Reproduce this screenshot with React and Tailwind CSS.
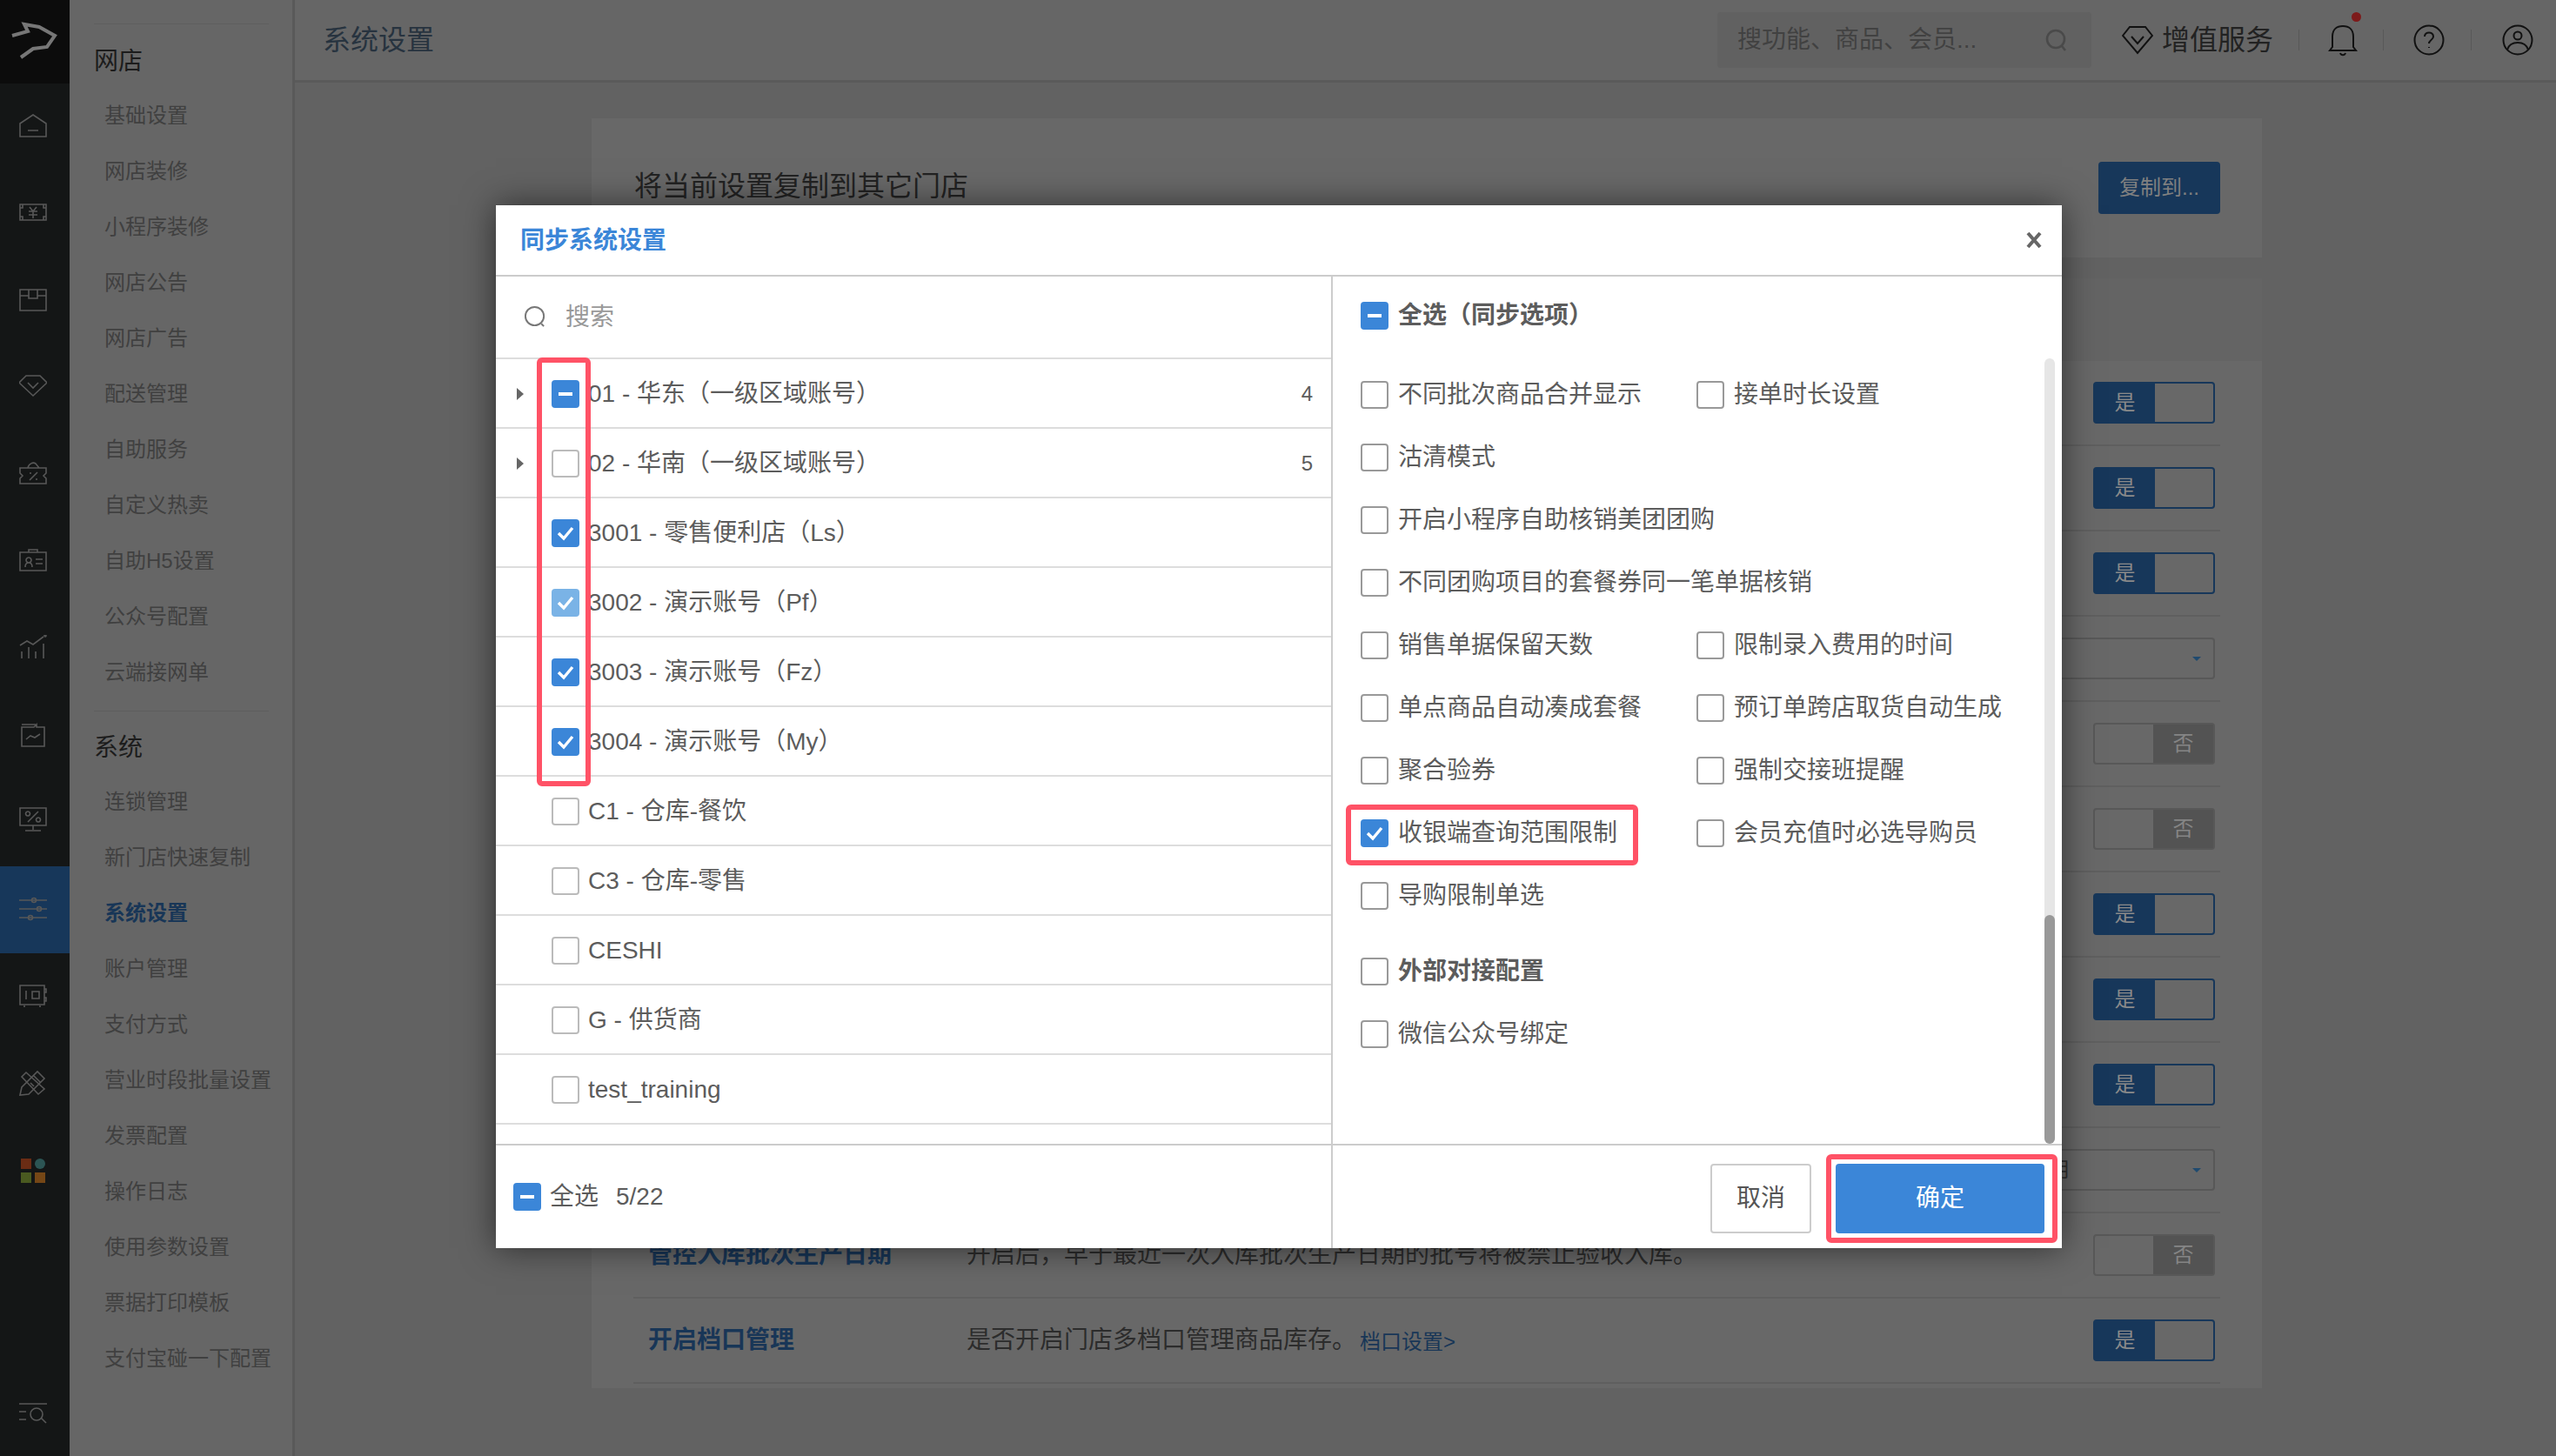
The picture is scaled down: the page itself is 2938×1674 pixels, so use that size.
import React from "react";

const stroke = { fill: "none", stroke: "currentColor", strokeWidth: 1.6 };

// rail icons
const railIcons = [
  <g key="home"><path d="M1 12 16 2l15 10v15H1zM10 20h12" /></g>,
  <g key="money"><path d="M1 5h30v18H1zM1 9h3V5M28 5v4h3M1 19h3v4M28 23v-4h3M12 8l4 5 4-5M11 13h10M11 17h10M16 13v8" /></g>,
  <g key="box"><path d="M1 3h30v24H1zM1 10h10M21 10h10M11 3v10h10V3" /></g>,
  <g key="diamond"><path d="M8 2h16l8 8-16 15L0 10zM10 10l6 6 6-6" /></g>,
  <g key="ticket"><path d="M1 8h30v6l-3 3 3 3v6H1v-6l3-3-3-3zM10 8c1-5 6-7 9-5l4 5M21 13 12 22M12 14h2M19 21h2" /></g>,
  <g key="card"><path d="M1 5h30v21H1zM11 2h10v3H11zM7 22c0-4 2-5 4-5s4 1 4 5M11 11a3 3 0 1 0 .01 0M19 13h8M19 18h8" /></g>,
  <g key="chart"><path d="M1 12l8-5 7 4 12-9M3 27v-8M11 27V14M19 27v-8M28 27V10" /><circle cx="30" cy="1" r="1" /></g>,
  <g key="folder"><path d="M3 6h14l3-3v3h9v22H3zM3 3h16M8 20l5-4 5 2 6-4" /></g>,
  <g key="promo"><path d="M1 3h30v20H1zM16 23v5M7 29h18M10 19 22 7M10 7a2.5 2.5 0 1 0 .01 0M22 14a2.5 2.5 0 1 0 .01 0" /></g>,
  <g key="sliders"><path d="M0 5h32M0 15h32M0 25h32" /><circle cx="17" cy="5" r="2.5" /><circle cx="23" cy="15" r="2.5" /><circle cx="13" cy="25" r="2.5" /></g>,
  <g key="safe"><path d="M1 3h28v22H1zM29 7h2v4h-2M29 17h2v4h-2M6 26v2M24 26v2M8 9v10M15 10h8v8h-8z" /></g>,
  <g key="tools"><path d="M1 29l2-9L21 2l8 8-18 18zM16 6l8 8M8 3 3 8l19 20 7-6zM13 15l4 4" /></g>,
];

const Checkbox = ({ state, tone = "border-[#bbbbbb]" }) => {
  if (state === "on" || state === "soft" || state === "part") {
    return (
      <span className={`flex w-[32px] h-[32px] shrink-0 items-center justify-center rounded-[4px] ${state === "soft" ? "bg-[#7ab3e6]" : "bg-[#3b86d8]"}`}>
        {state === "part" ? (
          <span className="w-[16px] h-[4px] bg-white" />
        ) : (
          <svg viewBox="0 0 24 24" className="w-[24px] h-[24px]" fill="none" stroke="white" strokeWidth="3.4">
            <path d="M4 12l6 6L20 6" />
          </svg>
        )}
      </span>
    );
  }
  return <span className={`block w-[32px] h-[32px] shrink-0 rounded-[4px] border-2 bg-white ${tone}`} />;
};

const Toggle = ({ on }) =>
  on ? (
    <div className="flex w-[140px] h-[48px] rounded-[4px] border-2 border-[#17375a] bg-[#686868]">
      <span className="flex w-[69px] items-center justify-center bg-[#17375a] text-[24px] text-[#8a8a8a]">是</span>
    </div>
  ) : (
    <div className="flex w-[140px] h-[48px] justify-end rounded-[4px] border-2 border-[#585858] bg-[#686868]">
      <span className="flex w-[69px] items-center justify-center bg-[#535353] text-[24px] text-[#858585]">否</span>
    </div>
  );

const DropDown = ({ label }) => (
  <div className="flex w-[240px] h-[48px] items-center justify-between rounded-[4px] border-2 border-[#585858] pl-[23px] pr-[14px] text-[24px] text-[#333333]">
    <span>{label}</span>
    <span className="w-0 h-0 border-x-[5px] border-t-[5px] border-x-transparent border-t-[#1f4a6f]" />
  </div>
);

const shopMenu = ["基础设置", "网店装修", "小程序装修", "网店公告", "网店广告", "配送管理", "自助服务", "自定义热卖", "自助H5设置", "公众号配置", "云端接网单"];
const systemMenu = ["连锁管理", "新门店快速复制", "系统设置", "账户管理", "支付方式", "营业时段批量设置", "发票配置", "操作日志", "使用参数设置", "票据打印模板", "支付宝碰一下配置"];

const settingRows = [
  { kind: "on" },
  { kind: "on" },
  { kind: "on" },
  { kind: "select" },
  { kind: "off" },
  { kind: "off" },
  { kind: "on" },
  { kind: "on" },
  { kind: "on" },
  { kind: "select", label: "启用" },
  { kind: "off", title: "管控入库批次生产日期", desc: "开启后，早于最近一次入库批次生产日期的批号将被禁止验收入库。" },
  { kind: "on", title: "开启档口管理", desc: "是否开启门店多档口管理商品库存。", link: "档口设置>" },
];

const stores = [
  { name: "01 - 华东（一级区域账号）", state: "part", count: 4 },
  { name: "02 - 华南（一级区域账号）", state: "off", count: 5 },
  { name: "3001 - 零售便利店（Ls）", state: "on" },
  { name: "3002 - 演示账号（Pf）", state: "soft" },
  { name: "3003 - 演示账号（Fz）", state: "on" },
  { name: "3004 - 演示账号（My）", state: "on" },
  { name: "C1 - 仓库-餐饮", state: "off" },
  { name: "C3 - 仓库-零售", state: "off" },
  { name: "CESHI", state: "off" },
  { name: "G - 供货商", state: "off" },
  { name: "test_training", state: "off" },
];

const syncOptions = [
  ["不同批次商品合并显示", "接单时长设置"],
  ["沽清模式"],
  ["开启小程序自助核销美团团购"],
  ["不同团购项目的套餐券同一笔单据核销"],
  ["销售单据保留天数", "限制录入费用的时间"],
  ["单点商品自动凑成套餐", "预订单跨店取货自动生成"],
  ["聚合验券", "强制交接班提醒"],
  ["收银端查询范围限制", "会员充值时必选导购员"],
  ["导购限制单选"],
];

const Option = ({ label, state = "off", bold }) => (
  <div className={`flex w-[386px] items-center gap-[11px] whitespace-nowrap ${bold ? "font-bold" : ""}`}>
    <Checkbox state={state} tone="border-[#999999]" />
    <span>{label}</span>
  </div>
);

export default function App() {
  return (
    <div className="relative flex w-[2938px] h-[1674px] overflow-hidden bg-[#626262] font-['Liberation_Sans','Noto_Sans_CJK_SC',sans-serif]">
      {/* icon rail */}
      <aside className="flex w-[80px] shrink-0 flex-col bg-[#141616] text-[#585858]">
        <div className="h-[96px] bg-[#0c0c0c]">
          <svg viewBox="0 0 80 95" className="w-[80px] h-[95px]" fill="none" stroke="#777777" strokeWidth="4">
            <path d="M14 41 32 36 28 28 45 31 63 41 54 54 38 56 24 66" />
          </svg>
        </div>
        {railIcons.map((icon, i) => (
          <div key={i} className={`flex h-[100px] items-center justify-center pr-[4px] ${i === 9 ? "bg-[#17375a]" : ""} ${i === 8 ? "pb-[8px]" : ""}`}>
            <svg viewBox="0 0 32 32" className="w-[32px] h-[32px]" {...stroke}>{icon}</svg>
          </div>
        ))}
        <div className="flex h-[100px] items-center justify-center pr-[4px]">
          <svg viewBox="0 0 32 32" className="w-[32px] h-[32px]">
            <rect x="2" y="2" width="12" height="12" fill="#6a2c14" />
            <ellipse cx="24" cy="8" rx="6" ry="6" fill="#2c5554" />
            <rect x="2" y="18" width="12" height="12" fill="#4a5a20" />
            <rect x="18" y="18" width="12" height="12" fill="#754716" />
          </svg>
        </div>
        <div className="mt-auto flex h-[100px] items-center justify-center pr-[4px]">
          <svg viewBox="0 0 32 32" className="w-[32px] h-[32px]" {...stroke}>
            <path d="M0 6h32M0 15h8M0 24h8M25 22l6 6" />
            <circle cx="20" cy="18" r="7" />
          </svg>
        </div>
      </aside>

      {/* second level menu */}
      <nav className="w-[259px] shrink-0 border-r-[3px] border-[#595959] bg-[#666666] px-[28px] pt-[27px] whitespace-nowrap">
        <div className="w-[201px] border-t border-[#5e5e5e]">
          <div className="flex h-[73px] items-center pt-[12px] text-[28px] text-[#1c1c1c]">网店</div>
          {shopMenu.map((item) => (
            <div key={item} className="flex h-[64px] items-center pl-[12px] text-[24px] text-[#404040]">{item}</div>
          ))}
        </div>
        <div className="mt-[12px] w-[201px] border-t border-[#5e5e5e]">
          <div className="flex h-[72px] items-center pt-[12px] text-[28px] text-[#1c1c1c]">系统</div>
          {systemMenu.map((item) => (
            <div key={item} className={`flex h-[64px] items-center pl-[12px] text-[24px] ${item === "系统设置" ? "font-bold text-[#183657]" : "text-[#404040]"}`}>{item}</div>
          ))}
        </div>
      </nav>

      <main className="flex min-w-0 flex-1 flex-col">
        {/* top bar */}
        <header className="flex h-[95px] shrink-0 items-center border-b-[3px] border-[#5a5a5a] bg-[#666666] pl-[32px]">
          <h1 className="text-[32px] text-[#27333f]">系统设置</h1>
          <div className="ml-auto flex w-[430px] h-[64px] items-center justify-between rounded-[4px] bg-[#616161] pl-[23px] pr-[26px] text-[28px] text-[#414141]">
            <span>搜功能、商品、会员...</span>
            <svg viewBox="0 0 28 28" className="w-[28px] h-[28px]" fill="none" stroke="#4a4a4a" strokeWidth="2.6">
              <circle cx="13" cy="13" r="10" />
              <path d="M20 21l4 5" />
            </svg>
          </div>
          <svg viewBox="0 0 36 34" className="ml-[35px] w-[36px] h-[34px]" fill="none" stroke="#111111" strokeWidth="2">
            <path d="M9 2h18l8 10-17 20L1 12zM11 13l7 8 7-8" />
          </svg>
          <span className="ml-[10px] text-[32px] text-[#222222]">增值服务</span>
          <span className="ml-[29px] w-[1px] h-[24px] bg-[#585858]" />
          <div className="relative ml-[33px]">
            <svg viewBox="0 0 34 38" className="w-[34px] h-[38px]" fill="none" stroke="#111111" strokeWidth="2">
              <path d="M2 31h30l-3-4V15C29 7 24 3 17 3S5 7 5 15v12zM14 34c1 3 5 3 6 0" />
            </svg>
            <span className="absolute -top-[13px] left-[27px] w-[11px] h-[11px] rounded-full bg-[#7d1a1a]" />
          </div>
          <span className="ml-[29px] w-[1px] h-[24px] bg-[#585858]" />
          <svg viewBox="0 0 36 36" className="ml-[34px] w-[36px] h-[36px]" fill="none" stroke="#111111" strokeWidth="2">
            <circle cx="18" cy="18" r="16.5" />
            <path d="M13 14c0-6 10-6 10 0 0 4-5 4-5 8M18 26v1" />
          </svg>
          <span className="ml-[30px] w-[1px] h-[24px] bg-[#585858]" />
          <svg viewBox="0 0 36 36" className="ml-[35px] mr-[26px] w-[36px] h-[36px]" fill="none" stroke="#111111" strokeWidth="2">
            <circle cx="18" cy="18" r="16.5" />
            <circle cx="18" cy="13" r="4.5" />
            <path d="M6 29c2-6 7-8 12-8s10 2 12 8" />
          </svg>
        </header>

        <div className="ml-[341px] flex w-[1920px] flex-col gap-[24px] pt-[41px]">
          <section className="flex h-[160px] items-center justify-between bg-[#686868] pl-[49px] pr-[48px]">
            <h2 className="pb-[4px] text-[32px] text-[#222222]">将当前设置复制到其它门店</h2>
            <button className="w-[140px] h-[60px] rounded-[4px] bg-[#17375a] text-[24px] text-[#808080]">复制到...</button>
          </section>

          <section className="bg-[#686868] pb-[5px]">
            <div className="h-[95px] bg-[#646464]" />
            <div className="mx-[48px]">
              {settingRows.map((row, i) => (
                <div key={i} className="flex h-[98px] items-center border-b-2 border-[#5f5f5f] pl-[17px] pr-[6px]">
                  {row.title && <span className="w-[366px] text-[28px] font-bold text-[#183657]">{row.title}</span>}
                  {row.desc && <span className="text-[28px] text-[#2c2c2c]">{row.desc}</span>}
                  {row.link && <span className="ml-[4px] mt-[4px] text-[24px] text-[#183657]">{row.link}</span>}
                  <div className="ml-auto">
                    {row.kind === "select" ? <DropDown label={row.label} /> : <Toggle on={row.kind === "on"} />}
                  </div>
                </div>
              ))}
            </div>
          </section>
        </div>
      </main>

      {/* dialog */}
      <div className="absolute left-[570px] top-[236px] z-10 flex w-[1800px] h-[1199px] flex-col bg-white text-[28px] text-[#5c5c5c] shadow-[0_0_36px_rgba(0,0,0,0.55)]">
        <div className="flex h-[82px] shrink-0 items-center justify-between border-b-2 border-[#cccccc] pl-[28px] pr-[22px]">
          <h3 className="pt-[2px] text-[28px] font-bold text-[#3b86d8]">同步系统设置</h3>
          <svg viewBox="0 0 20 20" className="w-[20px] h-[20px]" fill="none" stroke="#666666" strokeWidth="4">
            <path d="M3 2l14 16M17 2 3 18" />
          </svg>
        </div>

        <div className="flex min-h-0 flex-1">
          <div className="flex w-[962px] shrink-0 flex-col border-r-2 border-[#cccccc]">
            <div className="flex h-[95px] shrink-0 items-center gap-[21px] border-b-2 border-[#dddddd] pl-[32px] text-[#999999]">
              <svg viewBox="0 0 28 28" className="w-[27px] h-[27px]" fill="none" stroke="#777777" strokeWidth="2">
                <circle cx="13" cy="13" r="11" />
                <path d="M21 22l3 3" />
              </svg>
              <span>搜索</span>
            </div>
            {stores.map((store) => (
              <div key={store.name} className="flex h-[80px] shrink-0 items-center border-b-2 border-[#dddddd] pt-[2px]">
                <div className="w-[64px] pl-[24px]">
                  {store.count && (
                    <svg viewBox="0 0 8 14" className="w-[8px] h-[14px]" fill="#666666">
                      <path d="M0 0l8 7-8 7z" />
                    </svg>
                  )}
                </div>
                <Checkbox state={store.state} />
                <span className="ml-[10px]">{store.name}</span>
                {store.count && <span className="ml-auto pr-[21px] text-[24px]">{store.count}</span>}
              </div>
            ))}
          </div>

          <div className="relative min-w-0 flex-1 pl-[32px] pt-[9px]">
            <div className="flex h-[72px] items-center">
              <Option label="全选（同步选项）" state="part" bold />
            </div>
            <div className="mt-[19px]">
              {syncOptions.map((row) => (
                <div key={row[0]} className="flex h-[72px] items-center">
                  {row.map((label) => (
                    <Option key={label} label={label} state={label === "收银端查询范围限制" ? "on" : "off"} />
                  ))}
                </div>
              ))}
            </div>
            <div className="mt-[15px]">
              <div className="flex h-[72px] items-center"><Option label="外部对接配置" bold /></div>
              <div className="flex h-[72px] items-center"><Option label="微信公众号绑定" /></div>
            </div>
            {/* scrollbar */}
            <div className="absolute right-[8px] top-[94px] bottom-0 w-[12px] rounded-full bg-[#e6e6e6]">
              <div className="absolute inset-x-0 bottom-0 h-[263px] rounded-full bg-[#999999]" />
            </div>
          </div>
        </div>

        <div className="flex h-[120px] shrink-0 border-t-2 border-[#cccccc]">
          <div className="flex w-[962px] shrink-0 items-center border-r-2 border-[#cccccc] pl-[20px]">
            <Checkbox state="part" />
            <span className="ml-[10px]">全选</span>
            <span className="ml-[20px]">5/22</span>
          </div>
          <div className="flex flex-1 items-start justify-end gap-[28px] pr-[20px] pt-[21px]">
            <button className="w-[116px] h-[80px] rounded-[4px] border-2 border-[#cccccc] bg-white text-[#555555]">取消</button>
            <button className="w-[240px] h-[80px] rounded-[4px] bg-[#3b86d8] text-white">确定</button>
          </div>
        </div>

        {/* red highlight marks */}
        <div className="absolute left-[47px] top-[175px] w-[62px] h-[493px] rounded-[6px] border-[6px] border-[#ff5266]" />
        <div className="absolute left-[977px] top-[689px] w-[336px] h-[70px] rounded-[6px] border-[6px] border-[#ff5266]" />
        <div className="absolute left-[1529px] top-[1091px] w-[266px] h-[102px] rounded-[6px] border-[6px] border-[#ff5266]" />
      </div>
    </div>
  );
}
